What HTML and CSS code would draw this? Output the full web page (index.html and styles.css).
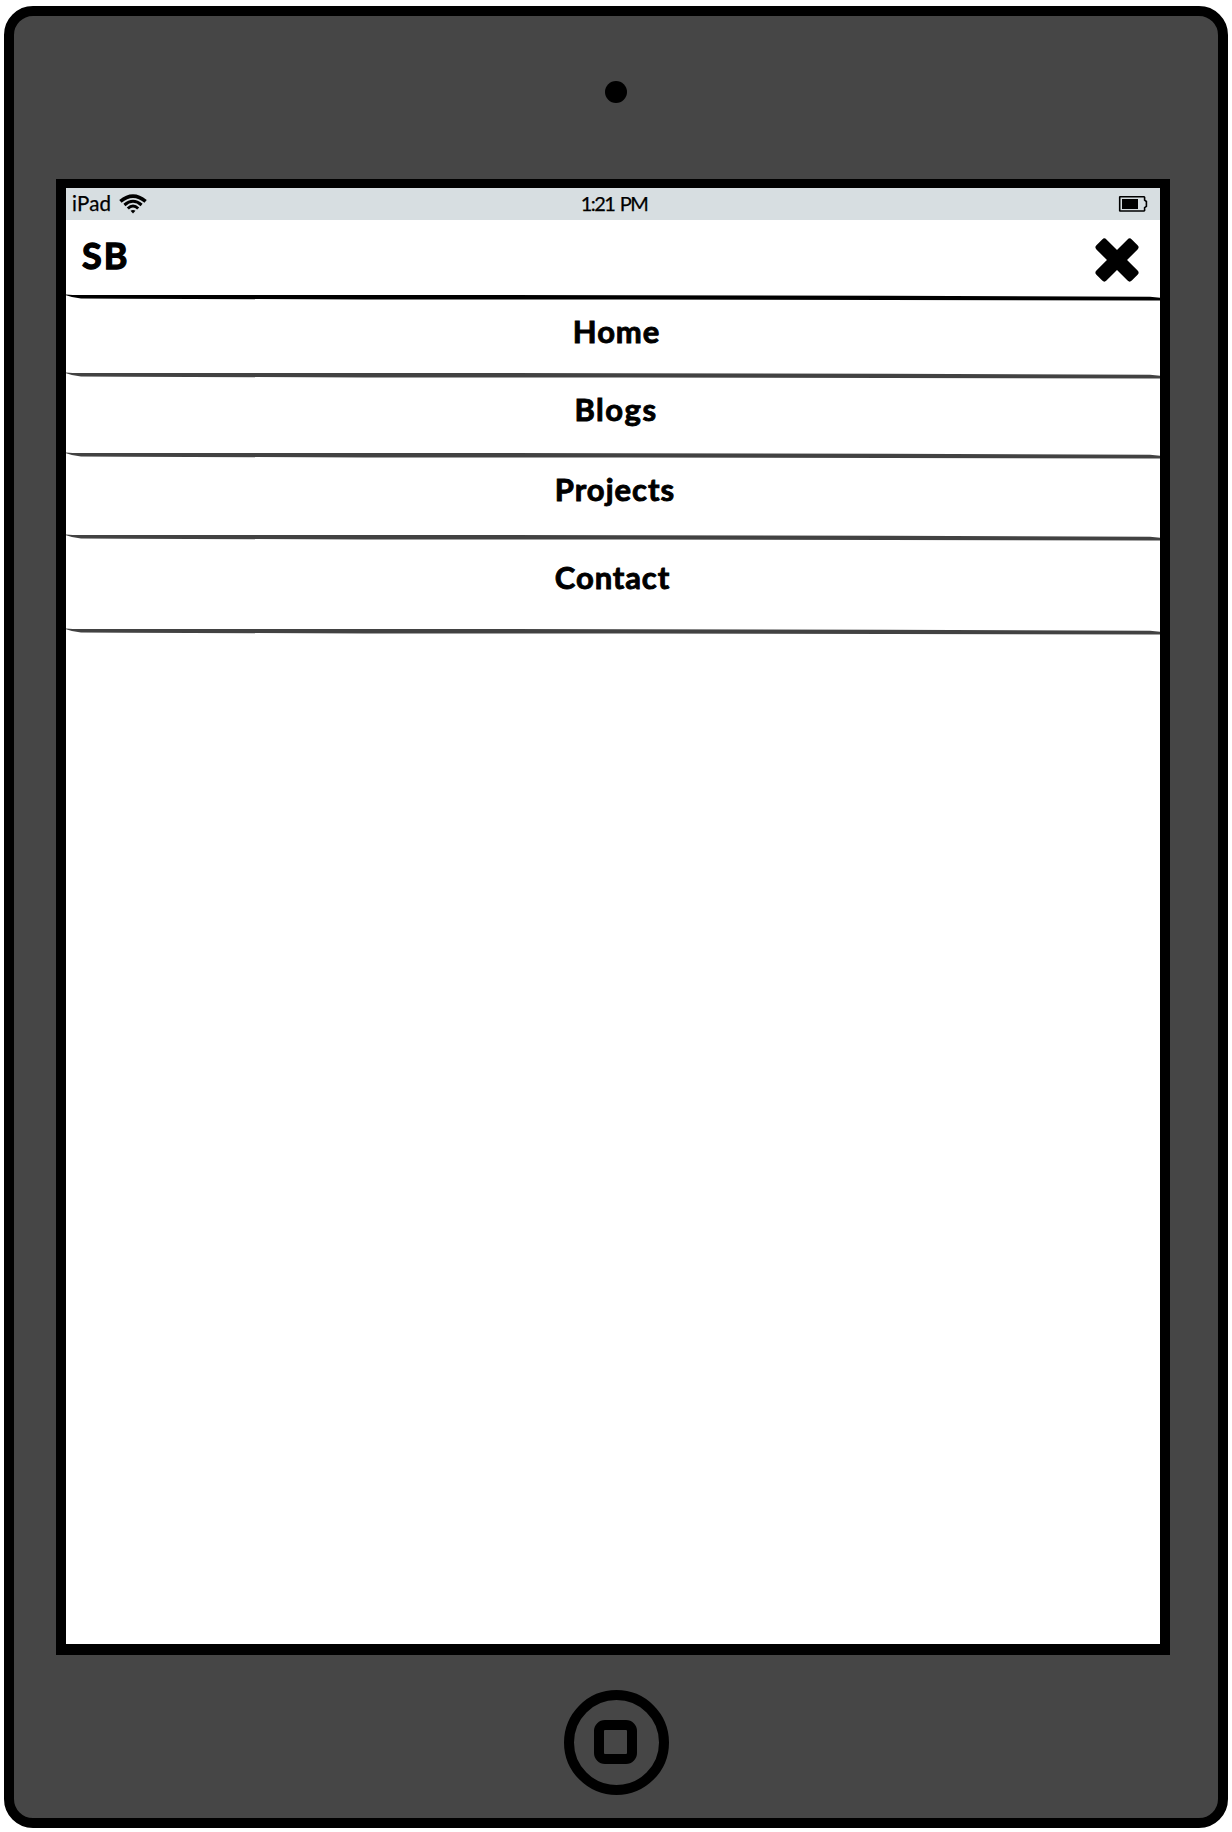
FILE: index.html
```html
<!DOCTYPE html>
<html lang="en">
<head>
<meta charset="utf-8">
<title>SB</title>
<link rel="stylesheet" href="styles.css">
</head>
<body>
<svg class="defs" width="0" height="0" aria-hidden="true">
  <symbol id="rule" viewBox="0 0 1094 7">
    <path d="M0 .4 Q6 1 15 1 L300 1 L560 1.2 L820 1.7 L1084 2.8 L1094 3.8 V6.6 L1084 6.4 L820 6 L560 5.6 L300 5.4 L60 4.8 L15 4.5 Q6 3.6 0 1.2Z"/>
  </symbol>
</svg>
<main class="device">
  <div class="camera"></div>
  <section class="screen">
    <div class="status">
      <div class="carrier">
        <span class="carrier-name">iPad</span>
        <svg class="wifi" width="28" height="20" viewBox="0 0 28 20">
          <g fill="none" stroke="#000" stroke-width="3.6">
            <path d="M1.4 7.4 Q14 -3.2 26.6 7.4"/>
            <path d="M5.4 11 Q14 3.6 22.6 11" stroke-width="3"/>
            <path d="M8.8 14.5 Q14 9.5 19.2 14.5" stroke-width="3"/>
          </g>
          <path d="M11.5 16.8 Q14 15 16.5 16.8 L14 19.4Z"/>
        </svg>
      </div>
      <span class="clock">1:21 PM</span>
      <svg class="battery" width="30" height="18" viewBox="0 0 30 18">
        <path d="M2 1.8 H26 L26.6 2.4 V5.2 L28.4 6.5 V11.3 L26.6 12.6 V15.4 L26 16 H2 L1.7 15.7 V2.1Z" fill="none" stroke="#000" stroke-width="1.6"/>
        <rect x="4" y="4" width="16" height="10"/>
      </svg>
    </div>
    <header class="header">
      <div class="header-bar">
        <span class="brand">SB</span>
        <svg class="close" width="44" height="44" viewBox="-22 -22 44 44">
          <rect x="-25" y="-7.1" width="50" height="14.2" rx="3" transform="rotate(45)"/>
          <rect x="-25" y="-7.1" width="50" height="14.2" rx="3" transform="rotate(-45)"/>
        </svg>
      </div>
      <svg class="rule"><use href="#rule"/></svg>
    </header>
    <nav class="menu">
      <a class="item home"><span class="label">Home</span><svg class="rule"><use href="#rule"/></svg></a>
      <a class="item blogs"><span class="label">Blogs</span><svg class="rule"><use href="#rule"/></svg></a>
      <a class="item projects"><span class="label">Projects</span><svg class="rule"><use href="#rule"/></svg></a>
      <a class="item contact"><span class="label">Contact</span><svg class="rule"><use href="#rule"/></svg></a>
    </nav>
  </section>
  <div class="home-button"><div class="home-glyph"></div></div>
</main>
</body>
</html>
```
FILE: styles.css
```css
* { box-sizing: border-box; }

body {
  margin: 0;
  padding: 6px 4px 4px;
  background: #fff;
  color: #000;
  font-family: Lato, "Liberation Sans", sans-serif;
}

.defs { display: block; }

.device {
  display: flex;
  flex-direction: column;
  width: 1224px;
  height: 1822px;
  border: 10px solid #000;
  border-radius: 29px;
  background: #464646;
}

.camera {
  width: 22px;
  height: 22px;
  margin: 65px 0 76px 591px;
  border-radius: 50%;
  background: #000;
}

.screen {
  width: 1114px;
  height: 1476px;
  margin-left: 42px;
  border: solid #000;
  border-width: 9px 10px 11px;
  background: #fff;
}

.status {
  display: grid;
  grid-template-columns: 1fr auto 1fr;
  align-items: center;
  height: 32px;
  padding: 0 12px 0 6px;
  background: #d7dee1;
  font-size: 20.5px;
  line-height: 30px;
  -webkit-text-stroke: 0.25px #000;
}

.carrier {
  display: flex;
  align-items: center;
  gap: 8px;
}

.carrier-name,
.clock { padding-bottom: 2px; }

.carrier-name { letter-spacing: 0.2px; }

.clock {
  padding-left: 8px;
  font-size: 20px;
  letter-spacing: -1.6px;
  word-spacing: 2px;
}

.battery { justify-self: end; }

.header { height: 81px; }

.header-bar {
  display: flex;
  align-items: flex-start;
  justify-content: space-between;
  height: 74px;
  padding: 15px 21px 0 16px;
}

.brand {
  font-size: 36px;
  font-weight: 700;
  line-height: 40px;
  letter-spacing: 2px;
  -webkit-text-stroke: 1.3px #000;
}

.close { margin-top: 3px; }

.rule {
  display: block;
  flex: none;
  width: 1094px;
  height: 7px;
  fill: #000;
}

.item {
  display: flex;
  flex-direction: column;
  align-items: center;
  justify-content: space-between;
  padding-top: 10px;
}

.item .rule { fill: #424242; }

.label {
  font-size: 31px;
  font-weight: 700;
  line-height: 40px;
  letter-spacing: 0.9px;
  -webkit-text-stroke: 0.9px #000;
}

.home { height: 78px; }
.home .label { padding-left: 7px; }

.blogs { height: 80px; }
.blogs .label { padding-left: 6px; letter-spacing: 1.5px; }

.projects { height: 82px; }
.projects .label { padding-left: 4px; letter-spacing: 1px; }

.contact { height: 94px; padding-top: 16px; }
.contact .label { padding-right: 1px; }

.home-button {
  display: flex;
  align-items: center;
  justify-content: center;
  width: 105px;
  height: 105px;
  margin: 35px 0 0 550px;
  border: 10px solid #000;
  border-radius: 50%;
}

.home-glyph {
  width: 43px;
  height: 44px;
  margin: 0 2px 1px 0;
  border: 10px solid #000;
  border-radius: 11px;
}
```
